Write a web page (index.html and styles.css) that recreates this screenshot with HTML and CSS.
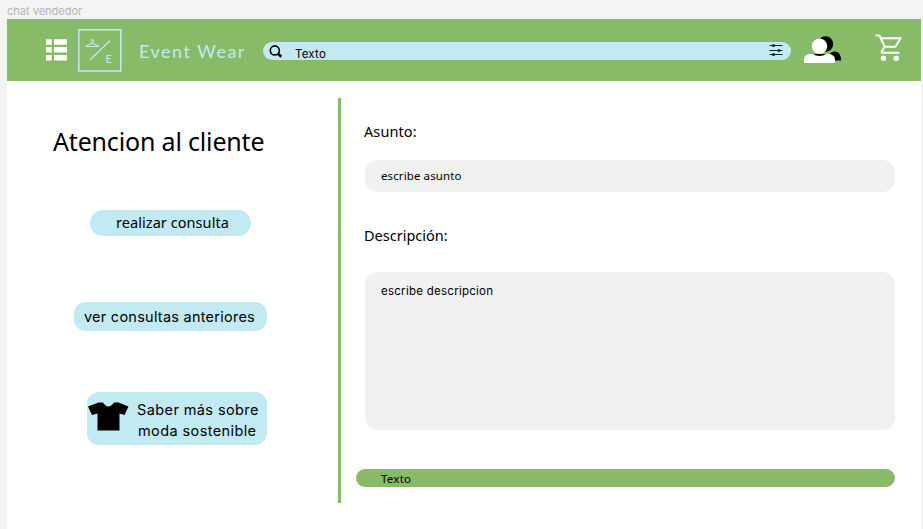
FILE: index.html
```html
<!DOCTYPE html>
<html lang="es">
<head>
<meta charset="utf-8">
<title>chat vendedor</title>
<link rel="stylesheet" href="styles.css">
</head>
<body>
<div class="frame-label"><span>chat vendedor</span></div>
<div class="frame">
  <header class="topbar">
    <svg class="menu" width="22" height="22" viewBox="0 0 22 22" fill="#fff"><path d="M0 .3h5.700v5.500H0zM8 .3h13v5.500H8zM0 8h5.700v5.500H0zM8 8h13v5.500H8zM0 16h5.700v5.500H0zM8 16h13v5.500H8z"/></svg>
    <svg class="logo" width="44" height="43" viewBox="0 0 44 43" fill="none" stroke="#c2eaf2">
      <rect x=".8" y=".8" width="42" height="41.200" stroke-width="1.500"/>
      <path d="M12 31 32 11.500" stroke-width="1.200"/>
      <path d="M13.300 11.800q0-1.300 1-1.300t1 1.200q0 .7-1 1.200v1l6.200 3.100v.5H8.100V17l6.200-3.100" stroke-width="1.100"/>
      <text class="logo-letter" x="27.400" y="33.500">E</text>
    </svg>
    <span class="brand">Event Wear</span>
    <div class="search">
      <svg width="14" height="14" viewBox="0 0 14 14" fill="none" stroke="#000"><circle cx="5.800" cy="5.400" r="4.500" stroke-width="1.600"/><path d="m9 8.700 3.300 3" stroke-width="2.700"/></svg>
      <span class="search-text">Texto</span>
      <svg class="filters" width="14" height="12" viewBox="0 0 14 12" stroke="#122629" fill="#122629"><path d="M.5 1.500h13M.5 6.500h13M.5 10.500h13" stroke-width="1"/><g stroke="none"><circle cx="4.500" cy="1.500" r="1.500"/><circle cx="10" cy="6.500" r="1.500"/><circle cx="4.500" cy="10.500" r="1.500"/></g></svg>
    </div>
    <svg class="users" width="38" height="28" viewBox="0 0 38 28"><circle cx="21.500" cy="8" r="7.700"/><path d="M8 19q7-3 16 0l2-1.500q2-2 4.500-2 6.500 0 6.500 9H30v-2L8 22z"/><g fill="#fff"><circle cx="15.500" cy="10.200" r="7.700"/><path d="M0 27v-3c0-4 2.500-6 6-6h2.500q7 4 14 0h2c4 0 6.500 2.500 6.500 6v3z"/></g></svg>
    <svg class="cart" width="28" height="28" viewBox="0 0 28 28" fill="none" stroke="#fff" stroke-width="2"><path d="M.5 1.500h4l5.300 11.300M5.500 4.300h20l-5 8.500H9.800l-3 4.500v1.500h17.500"/><g fill="#fff" stroke="none"><circle cx="8.500" cy="24.200" r="2.700"/><circle cx="21.300" cy="24.200" r="2.700"/></g></svg>
  </header>
  <main class="content">
    <aside class="sidebar">
      <h1><span>Atencion al cliente</span></h1>
      <a class="pill pill-new"><span>realizar consulta</span></a>
      <a class="pill pill-prev"><span>ver consultas anteriores</span></a>
      <a class="pill pill-learn">
        <svg width="41" height="29" viewBox="0 0 41 29" fill="#050000"><path d="M0 4.500 10.500.5H15q2.500 4 5.300 4T26 .5h4.500l10 4-4 8.500-5-1.500v17H9.500v-17L4 13z"/></svg>
        <div class="learn-text"><span class="l1">Saber más sobre</span><span class="l2">moda sostenible</span></div>
      </a>
    </aside>
    <section class="form">
      <label class="label-subject"><span>Asunto:</span></label>
      <div class="field subject"><span>escribe asunto</span></div>
      <label class="label-desc"><span>Descripción:</span></label>
      <div class="field desc"><span>escribe descripcion</span></div>
      <div class="submit"><span>Texto</span></div>
    </section>
  </main>
</div>
</body>
</html>
```
FILE: styles.css
```css
* { box-sizing: border-box; }
body {
  margin: 0;
  height: 529px;
  overflow: hidden;
  background: #f4f4f4;
  color: #000;
  font-family: "Noto Sans", sans-serif;
}
span { white-space: nowrap; }
svg { display: block; flex: none; }
.frame-label {
  height: 19px;
  padding-left: 7px;
  color: #b3b3b3;
  font: 11px/23px Inter, sans-serif;
}
.frame { width: 914px; height: 510px; margin-left: 7px; background: #fff; }
.topbar {
  display: flex;
  align-items: flex-start;
  height: 62px;
  padding-left: 39px;
  background: #88bb67;
}
.menu { margin-top: 20px; }
.logo { margin: 10px 0 0 10px; }
.logo-letter { font: 11px Lato, sans-serif; fill: #c2eaf2; stroke: none; }
.brand {
  width: 124px;
  margin: 20px 0 0 17px;
  color: #c2eaf2;
  font: 18px/25px Lato, sans-serif;
  letter-spacing: 1.5px;
}
.search {
  display: flex;
  width: 528px;
  height: 18px;
  margin-top: 23px;
  padding: 3px 8px 0 6px;
  border-radius: 9px;
  background: #c2eaf2;
}
.search-text { margin-left: 12px; font: 11.5px/18px Inter, sans-serif; letter-spacing: .2px; }
.filters { margin: -1px 0 0 auto; }
.users { margin: 17px 0 0 13px; }
.cart { margin: 15px 0 0 33px; }
.content { display: flex; height: 448px; padding-top: 17px; }
.sidebar { width: 331px; height: 405px; }
h1 {
  margin: 26px 0 0 46px;
  font-size: 25px;
  font-weight: 400;
  line-height: 34px;
  letter-spacing: -.17px;
}
.pill { display: flex; background: #c2eaf2; font-size: 14.5px; }
.pill-new {
  width: 161px;
  height: 26px;
  margin: 52px 0 0 83px;
  padding-left: 26px;
  border-radius: 13px;
  line-height: 24px;
  letter-spacing: .06px;
}
.pill-prev {
  width: 193px;
  height: 29px;
  margin: 66px 0 0 67px;
  padding-left: 10px;
  border-radius: 12px;
  font: 14.5px/30px Inter, sans-serif;
  letter-spacing: .25px;
}
.pill-learn {
  width: 180px;
  height: 53px;
  margin: 61px 0 0 80px;
  padding: 10px 0 0 1px;
  border-radius: 12px;
  font: 14.5px/21px Inter, sans-serif;
  letter-spacing: .4px;
}
.learn-text { display: flex; flex-direction: column; margin: -3px 0 0 8px; }
.l2 { margin-left: 1px; }
.form { width: 557px; height: 405px; border-left: 3px solid #88bb67; }
label { display: block; margin-left: 23px; font-size: 14.5px; line-height: 22px; }
.label-subject { padding-top: 22px; letter-spacing: .1px; }
.label-desc { padding-top: 32px; }
.field {
  width: 530px;
  margin-left: 24px;
  padding-left: 16px;
  border-radius: 13px;
  background: #f1f1f1;
  font-size: 11.5px;
}
.subject { height: 32px; margin-top: 18px; line-height: 32px; letter-spacing: .1px; }
.desc {
  height: 158px;
  margin-top: 26px;
  padding-top: 8px;
  font: 11.5px/22px Inter, sans-serif;
  letter-spacing: .26px;
}
.submit {
  width: 539px;
  height: 18px;
  margin: 39px 0 0 15px;
  padding-left: 25px;
  border-radius: 9px;
  background: #88bb67;
  font-size: 11.5px;
  line-height: 20px;
  letter-spacing: .25px;
}
```
